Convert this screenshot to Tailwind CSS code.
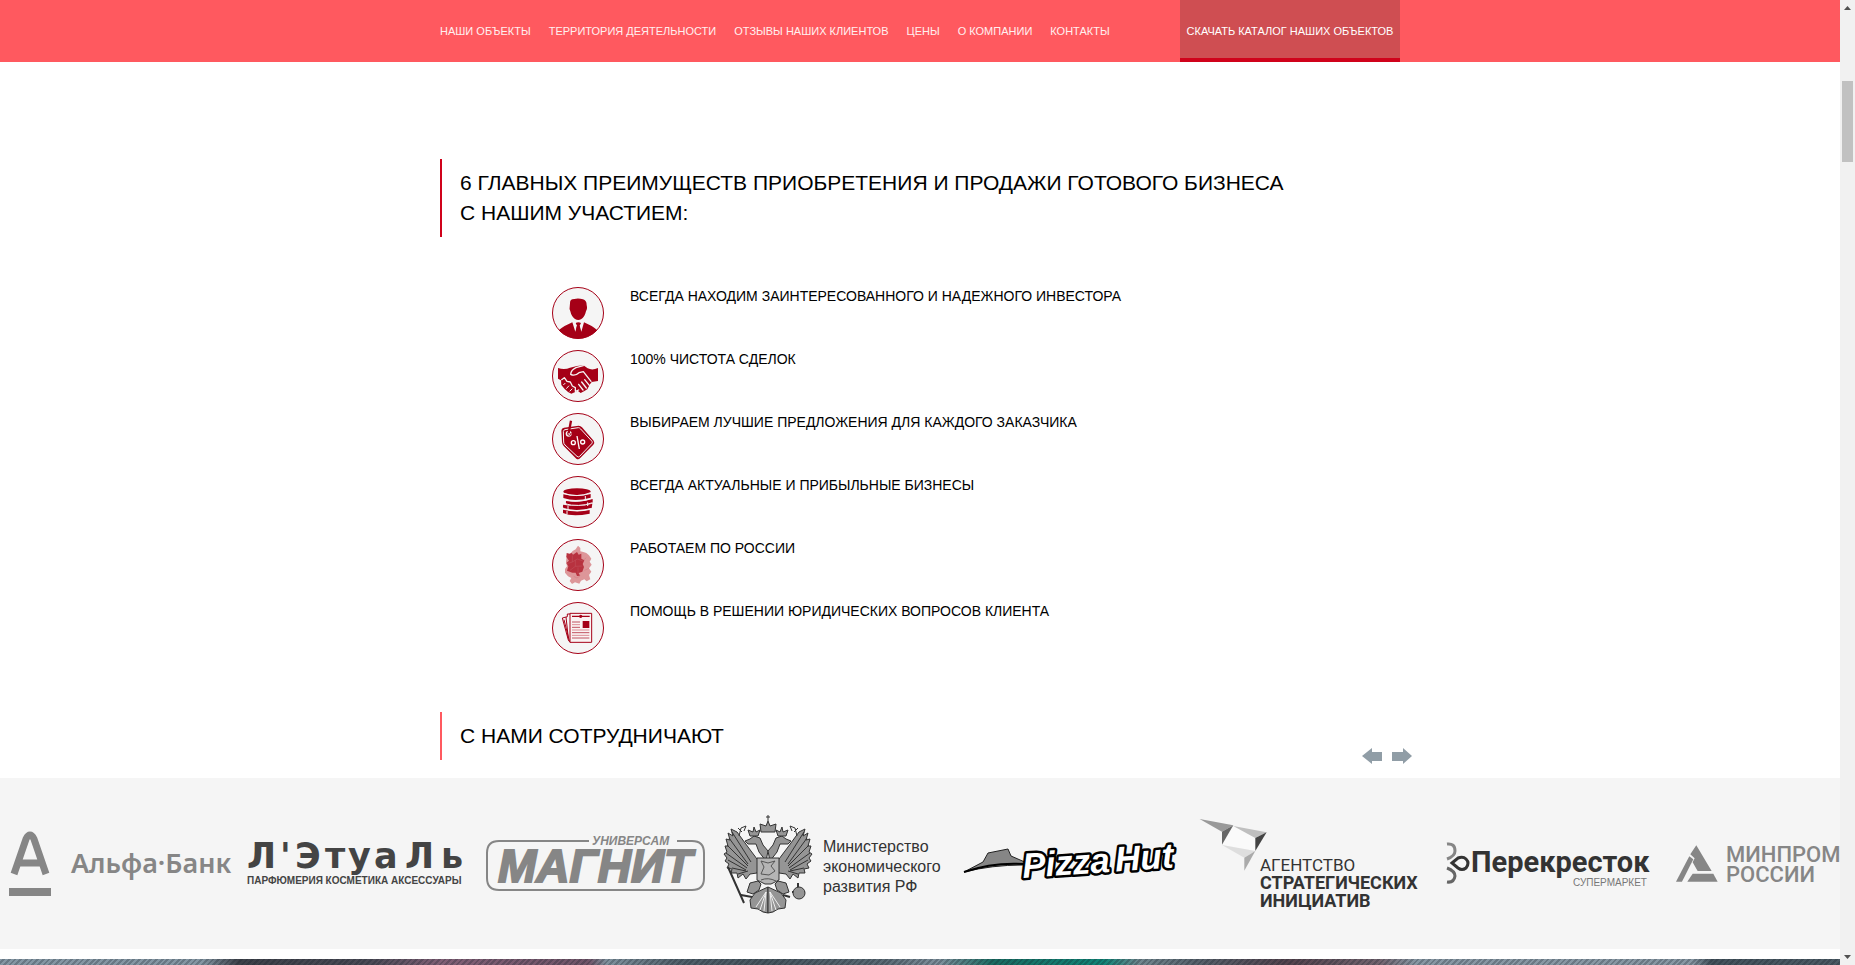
<!DOCTYPE html>
<html lang="ru">
<head>
<meta charset="utf-8">
<meta name="viewport" content="width=device-width, initial-scale=1">
<title>Готовый бизнес</title>
<script src="https://cdn.jsdelivr.net/npm/@tailwindcss/browser@4"></script>
</head>
<body class="flex min-h-screen bg-white font-['Liberation_Sans',sans-serif] text-black">
<div class="flex min-w-0 flex-1 flex-col">
  <header class="bg-[#ff595f] text-[#fff0f0]">
    <div class="mx-auto flex h-[62px] w-full max-w-[960px] items-stretch justify-between">
      <nav class="flex items-center gap-[18px] text-[11px] leading-4 whitespace-nowrap">
        <a href="#objects">НАШИ ОБЪЕКТЫ</a>
        <a href="#area">ТЕРРИТОРИЯ ДЕЯТЕЛЬНОСТИ</a>
        <a href="#reviews">ОТЗЫВЫ НАШИХ КЛИЕНТОВ</a>
        <a href="#prices">ЦЕНЫ</a>
        <a href="#about">О КОМПАНИИ</a>
        <a href="#contacts">КОНТАКТЫ</a>
      </nav>
      <a href="#catalog" class="flex w-[220px] items-center justify-center border-b-4 border-[#d0021b] bg-[#cf4e52] pt-1 text-[11px] leading-4 whitespace-nowrap text-white">СКАЧАТЬ КАТАЛОГ НАШИХ ОБЪЕКТОВ</a>
    </div>
  </header>

  <main class="flex flex-1 flex-col">
    <section class="mx-auto w-full max-w-[960px] pt-[97px]">
      <h2 class="border-l-2 border-[#d0021b] py-[9px] pl-[18px] text-[21px] leading-[30px]">6 ГЛАВНЫХ ПРЕИМУЩЕСТВ ПРИОБРЕТЕНИЯ И ПРОДАЖИ ГОТОВОГО БИЗНЕСА<br>С НАШИМ УЧАСТИЕМ:</h2>
      <ul class="mt-[50px] flex flex-col gap-[11px] pl-28 text-sm leading-[18px]">
        <li class="flex gap-[26px]">
          <svg class="size-[52px] shrink-0" viewBox="0 0 156 156" aria-hidden="true"><defs><clipPath id="disc"><circle cx="78" cy="78" r="77"/></clipPath></defs><circle cx="78" cy="78" r="76.500" fill="#f5f5f5" stroke="#a50017" stroke-width="3"/><g clip-path="url(#disc)" fill="#a50017"><path d="M54 49Q53 36 67 36Q79 33 93 37Q104 40 104 54L105 60Q106 68 102 73Q98 91 87 97Q78 101 69 96Q58 88 55 73Q51 68 53 61Z"/><path d="M20 130Q35 117 61 106L70 134L75 116L71 108Q79 104 87 108L83 116L88 134L96 106Q122 117 136 130L120 156H36Z"/><path d="M74 118H83L87 142L79 154L71 142Z"/></g></svg>
          <span>ВСЕГДА НАХОДИМ ЗАИНТЕРЕСОВАННОГО И НАДЕЖНОГО ИНВЕСТОРА</span>
        </li>
        <li class="flex gap-[26px]">
          <svg class="size-[52px] shrink-0" viewBox="0 0 156 156" aria-hidden="true"><circle cx="78" cy="78" r="76.500" fill="#f5f5f5" stroke="#a50017" stroke-width="3"/><path d="M18 54Q38 60 54 53L75 48L94 46L107 55Q121 62 138 54V93L119 96L114 103L106 118L96 124L86 129L77 122L68 127L58 131L48 126L38 117L28 105L27 91L18 86Z" fill="#a50017"/><path d="M94 47L72 53Q57 60 56 73Q68 80 81 68L94 65L117 94M29 89L37 83L45 94L55 96L61 108L70 113L70 124L80 120M80 103L93 120M89 96L103 114M98 89L112 106" fill="none" stroke="#f5f5f5" stroke-width="4" stroke-linecap="round" stroke-linejoin="round"/><path d="M34 105L40 99M43 116L51 107M53 124L61 116" stroke="#f5f5f5" stroke-width="3"/></svg>
          <span>100% ЧИСТОТА СДЕЛОК</span>
        </li>
        <li class="flex gap-[26px]">
          <svg class="size-[52px] shrink-0" viewBox="0 0 156 156" aria-hidden="true"><circle cx="78" cy="78" r="76.500" fill="#f5f5f5" stroke="#a50017" stroke-width="3"/><path d="M36 44L80 38Q86 38 90 43L125 83Q129 89 124 95L84 136Q79 141 73 137L35 99Q30 94 30 87L28 53Q28 46 36 44Z" fill="#a50017"/><path d="M39 50L79 44Q83 44 86 48L120 85Q122 88 119 92L83 130Q79 134 75 130L39 96Q35 92 35 87L34 56Q34 51 39 50Z" fill="none" stroke="#f5f5f5" stroke-width="3"/><circle cx="50" cy="62" r="9" fill="#f5f5f5"/><path d="M57 23L50 61" fill="none" stroke="#a50017" stroke-width="7"/><path d="M48 58Q44 66 52 67Q58 66 57 60" fill="none" stroke="#a50017" stroke-width="3"/><g fill="none" stroke="#fff" stroke-width="4"><circle cx="64" cy="89" r="6"/><circle cx="92" cy="87" r="6"/><path d="M75 69L82 108"/></g></svg>
          <span>ВЫБИРАЕМ ЛУЧШИЕ ПРЕДЛОЖЕНИЯ ДЛЯ КАЖДОГО ЗАКАЗЧИКА</span>
        </li>
        <li class="flex gap-[26px]">
          <svg class="size-[52px] shrink-0" viewBox="0 0 156 156" aria-hidden="true"><circle cx="78" cy="78" r="76.500" fill="#f5f5f5" stroke="#a50017" stroke-width="3"/><g fill="#a50017"><path d="M33 101V111Q60 123 113 113V102Q75 111 33 101Z"/><path d="M34 86Q31 92 35 97Q75 107 119 96L121 83Q80 96 34 86Z"/><path d="M42 75Q40 80 45 86Q83 94 122 81V69Q85 81 42 75Z"/><path d="M34 55V66Q70 78 116 65V54Q75 65 34 55Z"/><ellipse cx="75" cy="47" rx="41" ry="10"/></g><path d="M33 51Q74 67 116 50M38 71Q79 82 120 67M37 83Q80 95 122 80M34 98Q75 110 117 98" fill="none" stroke="#f5f5f5" stroke-width="3"/><path d="M100 60V70M107 79V90M48 89V100M45 105V115" stroke="#f5f5f5" stroke-width="3"/></svg>
          <span>ВСЕГДА АКТУАЛЬНЫЕ И ПРИБЫЛЬНЫЕ БИЗНЕСЫ</span>
        </li>
        <li class="flex gap-[26px]">
          <svg class="size-[52px] shrink-0" viewBox="0 0 156 156" aria-hidden="true"><circle cx="78" cy="78" r="76.500" fill="#f5f5f5" stroke="#a50017" stroke-width="3"/><path d="M62 36L71 31L78 20L85 27V37L94 39L103 42L111 49L118 59L113 68L119 77L111 88L118 98L111 108L115 121L104 127L97 121L87 125L82 134L69 130L60 135L53 126L58 117L48 112L39 101V90L45 82L42 69L44 50L56 43Z" fill="#dd9699"/><path d="M44 42L53 44L59 42L63 47L75 39L80 47L88 44V59L97 64L92 75L96 84L91 98L80 102L84 110L75 111L71 101L61 101L45 95L49 82L43 72L51 65L43 54Z" fill="#b8323f"/><path d="M61 49V69L45 74M61 69L76 60L93 66M70 64V82L91 81M70 82L54 94M78 85V105M65 112L75 117L85 110M103 56L94 64M97 94L111 88" fill="none" stroke="#c96870" stroke-width="1"/></svg>
          <span>РАБОТАЕМ ПО РОССИИ</span>
        </li>
        <li class="flex gap-[26px]">
          <svg class="size-[52px] shrink-0" viewBox="0 0 156 156" aria-hidden="true"><circle cx="78" cy="78" r="76.500" fill="#f5f5f5" stroke="#a50017" stroke-width="3"/><path d="M31 48L46 44V36H54M31 48L49 114L54 121M42 45L49 109M36 53L52 117" fill="none" stroke="#a50017" stroke-width="3"/><path d="M54 34H119V121H54Z" fill="#faf3f3" stroke="#a50017" stroke-width="3"/><path d="M60 43H82M89 43H113" stroke="#a50017" stroke-width="4"/><circle cx="86" cy="43" r="5" fill="#a50017"/><rect x="92" y="57" width="20" height="21" fill="#a50017"/><path d="M60 60H84M60 76H84M60 92H112M60 108H112" stroke="#a50017" stroke-width="2"/><path d="M60 68H84M60 84H112M60 100H112" stroke="#dd8c94" stroke-width="3"/></svg>
          <span>ПОМОЩЬ В РЕШЕНИИ ЮРИДИЧЕСКИХ ВОПРОСОВ КЛИЕНТА</span>
        </li>
      </ul>
    </section>

    <section class="pt-[58px]">
      <div class="mx-auto flex w-full max-w-[960px] items-end justify-between pb-[18px]">
        <h2 class="border-l-2 border-[#ff595f] py-[9px] pl-[18px] text-[21px] leading-[30px]">С НАМИ СОТРУДНИЧАЮТ</h2>
        <div class="-mr-3 -mb-1 flex gap-[10px]">
          <button type="button" aria-label="Назад"><svg class="block h-4 w-5" viewBox="0 0 20 16" aria-hidden="true"><path d="M0 8L10 0V4H20V13H10V16Z" fill="#909da6"/></svg></button>
          <button type="button" aria-label="Вперёд"><svg class="block h-4 w-5" viewBox="0 0 20 16" aria-hidden="true"><path d="M20 8L11 0V4H0V13H11V16Z" fill="#909da6"/></svg></button>
        </div>
      </div>

      <div class="flex overflow-hidden bg-[#f5f5f5] pt-[23px] pb-7">
        <!-- Альфа-Банк -->
        <svg class="h-[120px] w-[239px] shrink-0 overflow-visible" viewBox="0 800 239 120" fill="#868686">
          <path d="M14 873L26 838Q30 830 34 838L46 873M20 862H40" fill="none" stroke="#868686" stroke-width="7"/>
          <rect x="9" y="887" width="42" height="8"/>
          <text x="71" y="872" font-family="Noto Sans" font-size="27" font-weight="600">Альфа·Банк</text>
        </svg>
        <!-- Л'Этуаль -->
        <svg class="h-[120px] w-[239px] shrink-0 overflow-visible" viewBox="239 800 239 120" fill="#444">
          <text x="247 280 295 325 348 374 405 441" y="867" font-family="DejaVu Sans" font-size="35" font-weight="700">Л'ЭтуаЛь</text>
          <text x="247" y="883" font-family="Liberation Sans" font-size="10" font-weight="700">ПАРФЮМЕРИЯ КОСМЕТИКА АКСЕССУАРЫ</text>
        </svg>
        <!-- Магнит -->
        <svg class="h-[120px] w-[239px] shrink-0 overflow-visible" viewBox="478 800 239 120" fill="#868686">
          <path d="M589 840H499Q487 840 487 852V877Q487 889 499 889H692Q704 889 704 877V852Q704 840 692 840H677" fill="none" stroke="#868686" stroke-width="2"/>
          <text x="592" y="844" font-family="Liberation Sans" font-size="12" font-style="italic" font-weight="700">УНИВЕРСАМ</text>
          <text x="498" y="881" font-family="Liberation Sans" font-size="46" font-style="italic" font-weight="700" stroke="#868686" stroke-width="2">МАГНИТ</text>
        </svg>
        <!-- Министерство экономического развития -->
        <svg class="h-[120px] w-[239px] shrink-0 overflow-visible" viewBox="717 800 239 120">
          <g transform="translate(768 800)" fill="#959595" stroke="#333" stroke-linejoin="round">
            <g id="eagle-half">
              <path d="M-8 62L-14 54L-20 46L-31 31L-37 28L-35 35L-40 32L-38 39L-42 38L-40 45L-43 45L-41 51L-44 53L-41 57L-43 60L-39 63L-41 67L-36 68L-37 72L-31 72L-30 77L-25 73L-22 78L-18 73L-11 72Z" stroke-width="1"/>
              <path d="M-36 31L-17 61M-39 37L-20 63M-41 44L-20 65M-42 52L-21 67M-40 59L-22 69M-36 67L-22 70M-30 73L-20 70" fill="none" stroke-width="1"/>
              <path d="M-2 60L-9 51L-12 43L-20 43L-23 40L-18 38L-14 35L-8 37L-5 44L0 50Z" stroke-width="1"/>
              <path d="M-18 35L-20 29L-15 31L-14 26L-12 31L-8 29L-10 35Z" stroke-width="1"/>
              <path d="M-29 35L-27 27L-22 25L-24 30M-26 31L-30 27" fill="none" stroke-width="1"/>
              <path d="M-10 80L-18 82L-21 91L-15 93L-9 89L-7 83Z" stroke-width="1"/>
              <path d="M0 86L-13 92L-18 99L-17 107L-10 108L-5 111L0 112Z" stroke-width="1"/>
              <path d="M-2 91L-12 106M-2 91L-8 109M-2 91L-4 110" fill="none" stroke="#eee" stroke-width="1"/>
            </g>
            <use href="#eagle-half" transform="scale(-1 1)"/>
            <path d="M-7 31L-8 23L-2 25L0 20L2 25L8 23L7 31Z" stroke-width="1"/>
            <path d="M0 14V20M-2 16H2" stroke-width="1"/>
            <path d="M-11 57H11V79L3 83H-3L-11 79Z" fill="#b5b5b5" stroke-width="1"/>
            <path d="M-7 60L-4 66L-7 73L1 74L7 70L3 65L7 60L0 62ZM-7 79Q0 76 8 80" fill="none" stroke="#555" stroke-width="1"/>
            <path d="M-40 66L-24 102M-27 94L-16 96" fill="none" stroke-width="2"/>
            <path d="M24 91H37M30 82V91M22 96L15 94" fill="none" stroke-width="2"/><circle cx="31" cy="92" r="6" stroke-width="1"/>
          </g>
          <text font-family="Liberation Sans" font-size="16" fill="#333"><tspan x="823" y="851">Министерство</tspan><tspan x="823" y="871">экономического</tspan><tspan x="823" y="891">развития РФ</tspan></text>
        </svg>
        <!-- Pizza Hut -->
        <svg class="h-[120px] w-[239px] shrink-0 overflow-visible" viewBox="956 800 239 120">
          <path d="M964 871L983 861L988 852L1008 848L1011 855L1027 862L1023 864Q992 864 964 871Z" fill="#868686" stroke="#222" stroke-width="1"/>
          <path d="M964 871Q993 861 1024 863" fill="none" stroke="#000" stroke-width="2"/>
          <text transform="rotate(-4 1022 876)" y="877" font-family="Liberation Sans" font-size="35" font-style="italic" font-weight="700" fill="#fff" stroke="#000" stroke-width="5" stroke-linejoin="round" paint-order="stroke"><tspan x="1023">Pizza</tspan><tspan x="1116">Hut</tspan></text>
        </svg>
        <!-- Агентство стратегических инициатив -->
        <svg class="h-[120px] w-[239px] shrink-0 overflow-visible" viewBox="1195 800 239 120" fill="#333">
          <g transform="translate(940 800) scale(.3333)">
            <path d="M880 75L946 111V150L846 131V92Z" fill="#fafafa"/>
            <path d="M779 54L880 73L846 92Z" fill="#999"/><path d="M880 73L846 92V131Z" fill="#666"/>
            <path d="M880 75L980 94L946 111Z" fill="#bfbfbf"/><path d="M980 94L946 111V150Z" fill="#444"/>
            <path d="M846 132L946 150L913 170Z" fill="#dedede"/><path d="M946 150L913 170V209Z" fill="#aaa"/>
          </g>
          <text font-family="Roboto" font-size="18"><tspan x="1260" y="870" font-size="17">АГЕНТСТВО</tspan><tspan x="1260" y="888" font-weight="700">СТРАТЕГИЧЕСКИХ</tspan><tspan x="1260" y="906" font-weight="700">ИНИЦИАТИВ</tspan></text>
        </svg>
        <!-- Перекресток -->
        <svg class="h-[120px] w-[239px] shrink-0 overflow-visible" viewBox="1434 800 239 120" fill="#333">
          <path d="M1447 843Q1455 842 1455 850Q1455 855 1447 858" fill="none" stroke="#868686" stroke-width="3"/>
          <path d="M1447 867Q1455 870 1455 875Q1454 882 1447 881" fill="none" stroke="#666" stroke-width="3"/>
          <path d="M1452 862L1458 857Q1463 855 1466 858Q1470 862 1466 867Q1462 870 1458 867Z" fill="none" stroke="#333" stroke-width="3"/>
          <text x="1471" y="871" font-family="Roboto" font-size="29" font-weight="700">Перекресток</text>
          <text x="1573" y="885" font-family="Liberation Sans" font-size="10" fill="#777">СУПЕРМАРКЕТ</text>
        </svg>
        <!-- Минпром России -->
        <svg class="h-[120px] w-[239px] shrink-0 overflow-visible" viewBox="1673 800 239 120" fill="#868686">
          <g transform="translate(1400 800) scale(.3333)"><path d="M889 133L935 210H893L878 184L884 172L871 160Z"/><path d="M868 166L880 175L846 242H828Z"/><path d="M878 218H940L953 242H862Z"/></g>
          <text font-family="Roboto" font-size="22" font-weight="500"><tspan x="1726" y="861">МИНПРОМ</tspan><tspan x="1726" y="881">РОССИИ</tspan></text>
        </svg>
      </div>
    </section>

    <div class="mt-[10px] min-h-[6px] flex-1 bg-[repeating-linear-gradient(135deg,transparent_0px,transparent_2px,rgba(20,30,40,0.25)_2px,rgba(20,30,40,0.25)_4px),linear-gradient(90deg,#8496a3_0%,#8496a3_11%,#3c4048_13%,#4a4a55_20%,#805f75_24%,#705468_32%,#7f919d_33%,#50606a_37%,#47565f_42%,#5a6a74_48%,#7f919d_51%,#196b61_54%,#108577_60%,#71868e_62%,#56616b_65%,#54434d_70%,#72636e_75%,#8797a3_77%,#8797a3_92%,#43525c_93%,#4b5a64_100%)]"></div>
  </main>
</div>

<div class="flex w-[15px] shrink-0 flex-col items-center bg-[#f1f1f1] py-[6px]" aria-hidden="true">
  <svg class="h-1 w-[7px]" viewBox="0 0 7 4"><path d="M0 4L3.500 0L7 4Z" fill="#505050"/></svg>
  <div class="mt-[71px] h-[81px] w-[11px] bg-[#c1c1c1]"></div>
  <svg class="mt-auto h-1 w-[7px]" viewBox="0 0 7 4"><path d="M0 0L3.500 4L7 0Z" fill="#505050"/></svg>
</div>
</body>
</html>
